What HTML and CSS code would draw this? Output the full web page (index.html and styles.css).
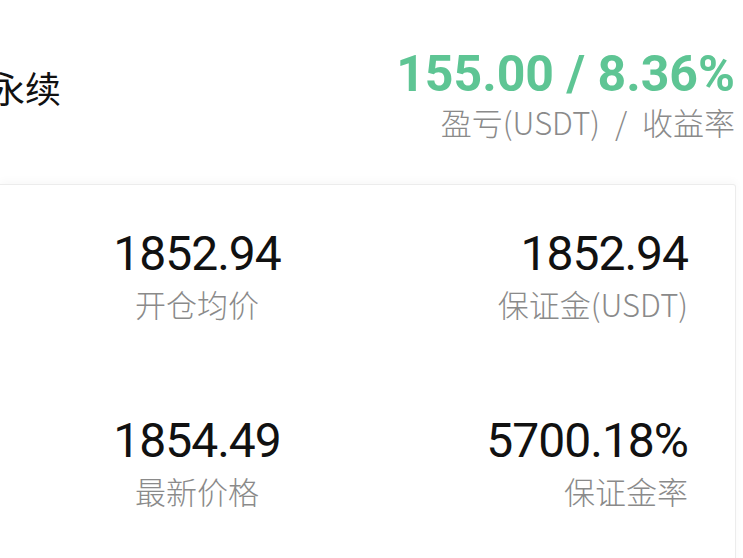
FILE: index.html
```html
<!DOCTYPE html>
<html lang="zh-CN">
<head>
    <meta charset="utf-8">
    <meta name="viewport" content="width=device-width, initial-scale=1">
    <title>永续持仓</title>
    <link rel="stylesheet" href="styles.css">
</head>
<body>
    <div class="page">
        <header class="top">
            <div class="title">永续</div>
            <div class="pnl">
                <div class="pnl-value">155.00 / 8.36%</div>
                <div class="pnl-label">盈亏(USDT) / 收益率</div>
            </div>
        </header>

        <section class="card">
            <div class="stats">
                <div class="stat stat-left">
                    <div class="stat-value">1852.94</div>
                    <div class="stat-label">开仓均价</div>
                </div>
                <div class="stat stat-right">
                    <div class="stat-value">1852.94</div>
                    <div class="stat-label">保证金(USDT)</div>
                </div>
                <div class="stat stat-left">
                    <div class="stat-value">1854.49</div>
                    <div class="stat-label">最新价格</div>
                </div>
                <div class="stat stat-right">
                    <div class="stat-value">5700.18%</div>
                    <div class="stat-label">保证金率</div>
                </div>
            </div>
        </section>
    </div>
</body>
</html>
```

FILE: styles.css
```css
* {
    margin: 0;
    padding: 0;
    box-sizing: border-box;
}
body {
    font-family: Roboto, "Noto Sans CJK SC", sans-serif;
    background: #fff;
    color: #111;
    overflow: hidden;
}
.page {
    width: 743px;
    height: 558px;
    overflow: hidden;
}

/* header */
.top {
    display: flex;
    justify-content: space-between;
    align-items: flex-start;
    padding: 46px 8px 0 0;
    height: 184px;
}
.title {
    margin-left: -11px;
    margin-top: 17px;
    font-family: "Noto Sans CJK SC", sans-serif;
    font-size: 36px;
    line-height: 48px;
    color: #111;
}
.pnl {
    text-align: right;
}
.pnl-value {
    font-size: 50px;
    line-height: 56px;
    font-weight: 700;
    color: #5ec594;
}
.pnl-label {
    margin-top: 2px;
    font-family: "Noto Sans CJK SC", sans-serif;
    font-size: 31px;
    font-weight: 300;
    line-height: 36px;
    word-spacing: 8px;
    color: #8a8a8a;
}

/* card */
.card {
    width: 736px;
    height: 400px;
    border: 1px solid #ececec;
    border-left: none;
    border-radius: 0 3px 0 0;
    box-shadow: 0 -3px 8px rgba(0,0,0,0.03);
}
.stats {
    display: grid;
    grid-template-columns: 394px 1fr;
}
.stat {
    padding: 43px 0 50px;
}
.stat-left {
    text-align: center;
}
.stat-right {
    text-align: right;
    padding-right: 47px;
}
.stat-value {
    font-size: 48px;
    line-height: 52px;
    letter-spacing: -1px;
    color: #111;
}
.stat-label {
    margin-top: 6px;
    font-family: "Noto Sans CJK SC", sans-serif;
    font-size: 31px;
    font-weight: 300;
    line-height: 36px;
    color: #8a8a8a;
}
```
